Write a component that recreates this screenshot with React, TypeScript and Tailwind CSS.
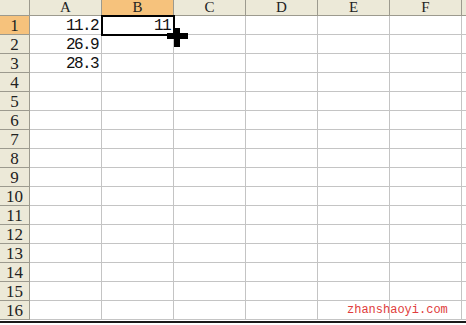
import React from "react";

const cols = ["A", "B", "C", "D", "E", "F"];
const data: Record<string, string> = { "1-A": "11.2", "2-A": "26.9", "3-A": "28.3", "1-B": "11" };

export default function App() {
  const rows = Array.from({ length: 16 }, (_, i) => i + 1);
  return (
    <div className="relative w-[466px] h-[325px] overflow-hidden bg-white" style={{ fontFamily: '"Liberation Mono", monospace' }}>
      <div className="grid grid-cols-[30px_72px_72px_72px_72px_72px_72px_4px] grid-rows-[16px_repeat(16,19px)]">
        <div className="bg-[#ECE9D8] border-r border-b border-[#9C9A8E]" />
        {cols.map((c) => (
          <div
            key={c}
            className={`flex items-center justify-center border-r border-b border-[#9C9A8E] text-[15px] leading-none text-[#222] ${c === "B" ? "bg-[#F6C27C]" : "bg-[#ECE9D8]"}`}
            style={{ fontFamily: '"Liberation Serif", serif' }}
          >
            {c}
          </div>
        ))}
        <div className="bg-[#ECE9D8] border-b border-[#9C9A8E]" />
        {rows.map((r) => (
          <React.Fragment key={r}>
            <div
              className={`flex items-center justify-center pt-[1px] border-r border-b border-[#9C9A8E] text-[17px] leading-none text-[#222] ${r === 1 ? "bg-[#F6C27C]" : "bg-[#ECE9D8]"}`}
              style={{ fontFamily: '"Liberation Serif", serif' }}
            >
              {r}
            </div>
            {cols.map((c) => (
              <div key={c} className="flex items-center justify-end pr-[3px] pt-[1px] border-r border-b border-[#C4C4C4] text-[16px] leading-none tracking-[-1.6px] text-[#111]">
                {data[`${r}-${c}`] ?? ""}
              </div>
            ))}
            <div className="border-b border-[#C4C4C4]" />
          </React.Fragment>
        ))}
      </div>
      <div className="h-[1px] bg-white" />
      <div className="h-[2px] bg-[#1a1a1a]" />
      {/* selection border */}
      <div className="absolute left-[101px] top-[15px] w-[74px] h-[21px] border-2 border-black" />
      {/* fill cross cursor */}
      <div className="absolute left-[167px] top-[33px] w-[21px] h-[6px] bg-black" />
      <div className="absolute left-[174px] top-[28px] w-[6px] h-[19px] bg-black" />
      <div className="absolute left-[347px] top-[304px] text-[12px] leading-none text-[#E03C3C]">
        zhanshaoyi.com
      </div>
    </div>
  );
}
